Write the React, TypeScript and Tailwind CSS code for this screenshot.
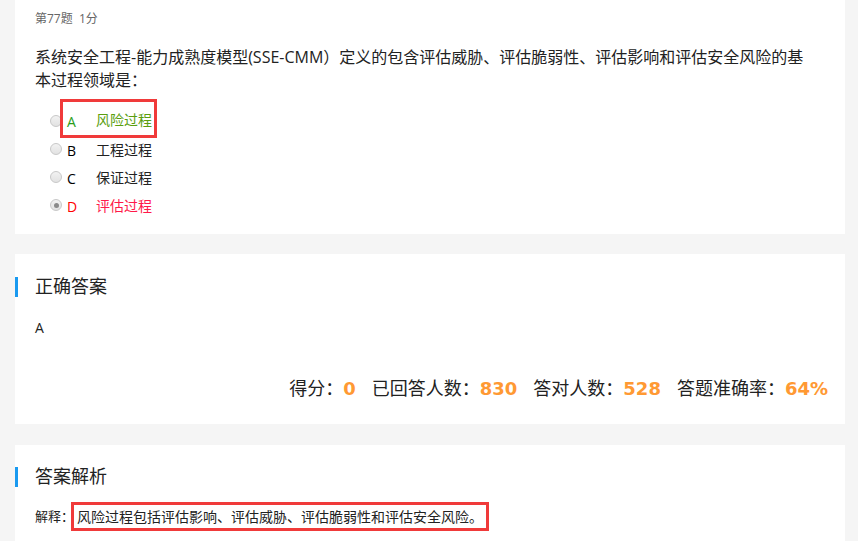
import React from "react";

const cjk = { fontFamily: '"Open Sans", "Noto Sans CJK SC", sans-serif' };
const num = { fontFamily: '"DejaVu Sans", sans-serif' };

const options = [
  { key: "A", text: "风险过程", letter: "text-[#2a9d1a]", label: "text-[#5a9e0f]", boxed: true },
  { key: "B", text: "工程过程", letter: "text-black", label: "text-[#222]" },
  { key: "C", text: "保证过程", letter: "text-black", label: "text-[#222]" },
  { key: "D", text: "评估过程", letter: "text-[#ff0000]", label: "text-[#ff1a4a]", checked: true },
];

function Radio({ checked }: { checked?: boolean }) {
  return (
    <span className="w-[12px] h-[12px] rounded-full border border-[#c8c8c8] bg-gradient-to-b from-[#f2f2f2] to-[#e2e2e2] flex items-center justify-center shrink-0">
      {checked && <span className="w-[5px] h-[5px] rounded-full bg-[#8a8a8a]" />}
    </span>
  );
}

function SectionTitle({ children }: { children: React.ReactNode }) {
  return (
    <div className="flex items-center h-[21px]">
      <span className="w-[3px] h-[20px] bg-[#1a9af0]" />
      <span className="ml-[17px] text-[18px] text-[#222] leading-[21px]">{children}</span>
    </div>
  );
}

export default function App() {
  return (
    <div className="w-[858px] h-[541px] overflow-hidden bg-[#f5f5f5] px-[15px]" style={cjk}>
      <div className="w-[830px] bg-white pl-[20px] pr-[28px] pt-[11px] pb-[15px]">
        <div className="text-[12px] text-[#666] leading-[16px]">第77题&nbsp;&nbsp;1分</div>
        <p className="mt-[19px] text-[16px] leading-[23px] text-[#222]">
          系统安全工程-能力成熟度模型(SSE-CMM）定义的包含评估威胁、评估脆弱性、评估影响和评估安全风险的基本过程领域是：
        </p>
        <div className="mt-[15px] pl-[15px] flex flex-col">
          {options.map((o) => (
            <div key={o.key} className="h-[28px] flex items-center">
              <Radio checked={o.checked} />
              <div
                className={
                  "ml-[-2px] flex items-center " +
                  (o.boxed
                    ? "border-[3px] border-[#f03a3a] h-[39px] pt-[3px] pl-[4px] pr-[2px] mt-[-6px]"
                    : "border-[3px] border-transparent h-[28px] pl-[4px]")
                }
              >
                <span className={"text-[14px] w-[29px] mt-[3px] " + o.letter}>{o.key}</span>
                <span className={"text-[14px] " + o.label}>{o.text}</span>
              </div>
            </div>
          ))}
        </div>
      </div>

      <div className="mt-[20px] w-[830px] h-[170px] bg-white pt-[22px] flex flex-col">
        <SectionTitle>正确答案</SectionTitle>
        <div className="mt-[20px] ml-[20px] text-[14px] text-[#222]">A</div>
        <div className="mt-[37px] mr-[17px] flex justify-end items-center text-[18px] text-[#222] gap-[16px]">
          <span>
            得分：<span className="text-[#ff9933] font-bold" style={num}>0</span>
          </span>
          <span>
            已回答人数：<span className="text-[#ff9933] font-bold" style={num}>830</span>
          </span>
          <span>
            答对人数：<span className="text-[#ff9933] font-bold" style={num}>528</span>
          </span>
          <span>
            答题准确率：<span className="text-[#ff9933] font-bold" style={num}>64%</span>
          </span>
        </div>
      </div>

      <div className="mt-[21px] w-[830px] h-[120px] bg-white pt-[21px]">
        <SectionTitle>答案解析</SectionTitle>
        <div className="mt-[15px] ml-[20px] flex items-center text-[13px] text-[#222]">
          <span>解释：</span>
          <span className="ml-[-3px] border-[3px] border-[#f03a3a] h-[29px] flex items-center px-[3px] text-[14px]">
            风险过程包括评估影响、评估威胁、评估脆弱性和评估安全风险。
          </span>
        </div>
      </div>
    </div>
  );
}
